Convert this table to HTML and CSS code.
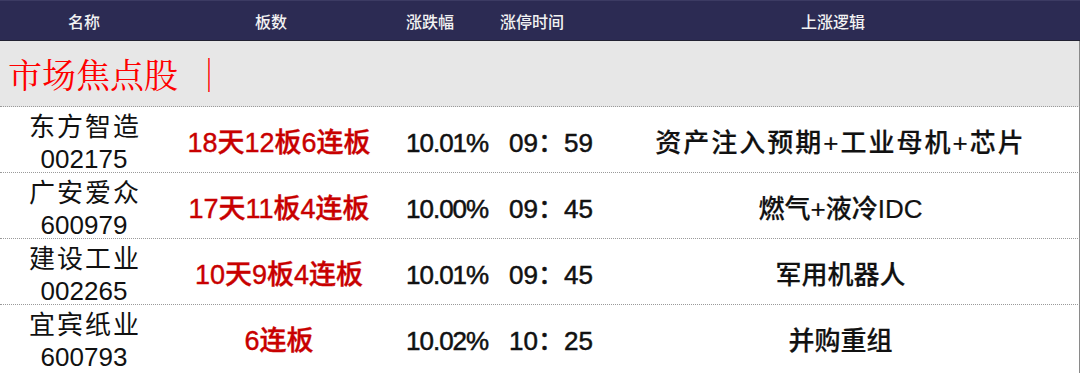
FILE: index.html
```html
<!DOCTYPE html>
<html lang="zh-CN">
<head>
<meta charset="utf-8">
<title>市场焦点股</title>
<link rel="stylesheet" href="styles.css">
</head>
<body>
<div class="table">
  <div class="head">
    <div class="h h-name">名称</div>
    <div class="h h-board">板数</div>
    <div class="h h-pct">涨跌幅</div>
    <div class="h h-time">涨停时间</div>
    <div class="h h-logic">上涨逻辑</div>
  </div>
  <div class="section"><span class="section-title">市场焦点股</span><span class="section-bar">｜</span></div>
  <div class="row">
    <div class="c name"><span class="stock">东方智造</span><span class="code">002175</span></div>
    <div class="c board">18天12板6连板</div>
    <div class="c pct">10.01%</div>
    <div class="c time">09：59</div>
    <div class="c logic wide">资产注入预期+工业母机+芯片</div>
  </div>
  <div class="row">
    <div class="c name"><span class="stock">广安爱众</span><span class="code">600979</span></div>
    <div class="c board">17天11板4连板</div>
    <div class="c pct">10.00%</div>
    <div class="c time">09：45</div>
    <div class="c logic">燃气+液冷IDC</div>
  </div>
  <div class="row">
    <div class="c name"><span class="stock">建设工业</span><span class="code">002265</span></div>
    <div class="c board">10天9板4连板</div>
    <div class="c pct">10.01%</div>
    <div class="c time">09：45</div>
    <div class="c logic">军用机器人</div>
  </div>
  <div class="row last">
    <div class="c name"><span class="stock">宜宾纸业</span><span class="code">600793</span></div>
    <div class="c board">6连板</div>
    <div class="c pct">10.02%</div>
    <div class="c time">10：25</div>
    <div class="c logic">并购重组</div>
  </div>
</div>
</body>
</html>
```
FILE: styles.css
```css
html, body {
  margin: 0;
  padding: 0;
  background: #ffffff;
}
body {
  width: 1080px;
  height: 373px;
  overflow: hidden;
  font-family: "Liberation Sans", "Noto Sans CJK SC", sans-serif;
  color: #111111;
}
.table {
  display: flex;
  flex-direction: column;
  width: 1080px;
}
.head {
  display: grid;
  grid-template-columns: 168px 222px 110px 102px 1fr;
  background: #2c2b53;
  border-top: 1px solid #3c3b63;
  border-bottom: 1px solid #222233;
  box-sizing: border-box;
  height: 41px;
  align-items: center;
  font-family: "Noto Sans CJK SC", sans-serif;
}
.h {
  color: #f2f2f2;
  font-size: 16px;
  font-weight: 500;
  line-height: 20px;
  text-align: center;
}
.h-board { padding-right: 16px; }
.h-pct { text-align: left; padding-left: 16px; }
.h-time { text-align: left; }
.h-logic { padding-right: 16px; }
.section {
  display: flex;
  align-items: center;
  height: 65px;
  background: #e7e7e7;
  border-bottom: 1px dotted #9a9a9a;
  border-right: 1px solid #8a8a8a;
  padding-left: 8px;
  color: #ff0000;
  font-family: "Noto Serif CJK SC", "Liberation Serif", "Noto Sans CJK SC", serif;
  font-size: 34px;
  font-weight: 400;
}
.section-bar {
  margin-left: 14px;
  font-weight: 300;
}
.row {
  display: grid;
  grid-template-columns: 168px 222px 110px 102px 1fr;
  height: 66px;
  box-sizing: border-box;
  border-bottom: 1px dotted #9a9a9a;
  border-right: 1px solid #8a8a8a;
  align-items: center;
  padding-top: 4px;
}
.row.last {
  border-bottom: none;
  height: 68px;
}
.c {
  font-size: 26px;
  line-height: 32px;
  text-align: center;
  white-space: nowrap;
}
.name {
  display: flex;
  flex-direction: column;
  align-items: center;
}
.stock {
  letter-spacing: 2px;
  margin-right: -2px;
}
.board {
  color: #c80000;
  font-weight: 500;
  font-size: 27px;
  -webkit-text-stroke: 0.4px #c80000;
}
.pct {
  text-align: left;
  padding-left: 16px;
  font-size: 26px;
  letter-spacing: -1px;
  -webkit-text-stroke: 0.5px #111111;
}
.time {
  -webkit-text-stroke: 0.5px #111111;
}
.logic {
  font-weight: 500;
  -webkit-text-stroke: 0.2px #111111;
}
.logic.wide {
  letter-spacing: 2px;
}
```
